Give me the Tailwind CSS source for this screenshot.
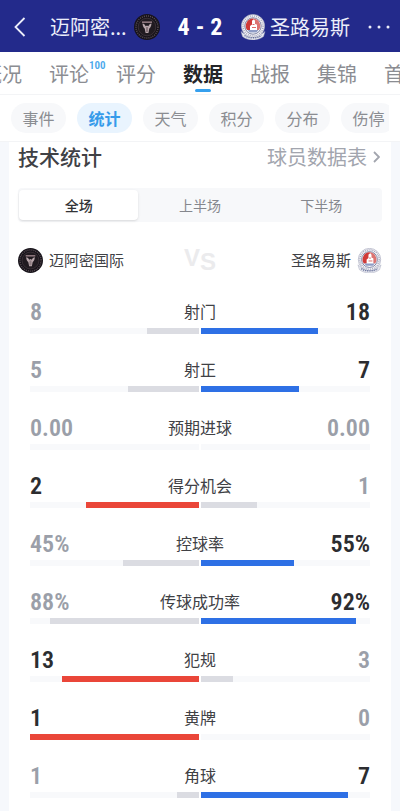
<!DOCTYPE html>
<html lang="zh-CN">
<head>
    <meta charset="UTF-8">
    <meta name="viewport" content="width=device-width, initial-scale=1.0">
    <title>技术统计</title>
    <script src="https://cdn.jsdelivr.net/npm/@tailwindcss/browser@4"></script>
</head>

<body class="bg-[#f6f8fc] font-['Noto_Sans_CJK_SC',sans-serif] text-[#404145] overflow-x-hidden">
    <!-- club badges -->
    <svg class="hidden" aria-hidden="true">
        <symbol id="miami" viewBox="0 0 26 26">
            <circle cx="13" cy="13" r="13" fill="#17131a"/>
            <circle cx="13" cy="13" r="11" fill="none" stroke="#5d5056" stroke-width="1.4" stroke-dasharray="1 1.1"/>
            <circle cx="13" cy="13" r="8.8" fill="#201a20" stroke="#4d4148" stroke-width=".6"/>
            <path d="M8 7.500h10v1.300H8z" fill="#a98d95"/>
            <path d="M8.500 9.500c1.400.2 2.500 1.200 3.200 2.700L13 11.500l1.300.7c.7-1.500 1.800-2.500 3.200-2.700-.2 2.500-1 4-2.200 5l-.9 4.500h-2.800l-.9-4.500c-1.200-1-2-2.500-2.200-5z" fill="#b9a7ac"/>
            <path d="M12.500 13v5M13.500 13v5" stroke="#5a474e" stroke-width=".5"/>
        </symbol>
        <symbol id="stlouis" viewBox="0 0 26 26">
            <path d="M1 17.500c2 2 4 3 7 3.500h10c3-.5 5-1.500 7-3.500l-1.500 5C21 24.500 17 26 13 26s-8-1.500-10.500-3.500z" fill="#e7e8ef" stroke="#a5a9be" stroke-width=".5"/>
            <circle cx="13" cy="12" r="11.600" fill="#f4f2f5" stroke="#a5a9be" stroke-width=".7"/>
            <circle cx="13" cy="12" r="10" fill="none" stroke="#969cb5" stroke-width="1.300" stroke-dasharray=".9 1.100"/>
            <circle cx="13" cy="12" r="8.200" fill="#fff" stroke="#5d668e" stroke-width=".8"/>
            <path d="M13 4.500a7.400 7.400 0 0 0-6 11.500h3v-4l2-1.500V7l2-2z" fill="#d03a38"/>
            <path d="M13 4.500a7.400 7.400 0 0 1 6 11.500h-2v-5l-2-1V7z" fill="#dc7371"/>
            <path d="M12.300 6.500h2.400v4h2V16h-6v-3.500h1.600z" fill="#fff"/>
            <path d="M12.500 10.500h2M12 13.500h4" stroke="#d34643" stroke-width=".8"/>
            <path d="M7.500 16h11l-2 2.500h-7z" fill="#8e9cc6"/>
            <path d="M4.500 21.500c2.500 1.700 5 2.300 8.500 2.300s6-.6 8.500-2.300" fill="none" stroke="#65709b" stroke-width="1.500" stroke-dasharray="1.200 1"/>
        </symbol>
    </svg>

    <header class="bg-[#232a8b] text-[#eceefa] h-[52px] pt-0.5 px-2.5 flex items-center">
        <button class="w-10 shrink-0 pl-1" aria-label="返回">
            <svg class="w-3 h-5" viewBox="0 0 12 20" fill="none" stroke="currentColor" stroke-width="1.800"><path d="M10.500 1 1.500 10l9 9"/></svg>
        </button>
        <div class="flex-1 flex items-center whitespace-nowrap">
            <span class="w-[84px] shrink-0 text-[20px]">迈阿密...</span>
            <svg class="w-[26px] h-[26px] shrink-0"><use href="#miami"/></svg>
            <span class="flex-1 flex justify-center gap-1.5 text-[24px] font-bold text-white font-['Roboto_Condensed','Liberation_Sans_Narrow',sans-serif]"><span>4</span><span>-</span><span>2</span></span>
            <svg class="w-[26px] h-[26px] shrink-0"><use href="#stlouis"/></svg>
            <span class="w-[84px] shrink-0 pl-1 text-[20px]">圣路易斯</span>
        </div>
        <button class="w-10 shrink-0 flex justify-end" aria-label="更多">
            <svg class="w-[22px] h-1" viewBox="0 0 22 4" fill="currentColor"><circle cx="2" cy="2" r="1.500"/><circle cx="11" cy="2" r="1.500"/><circle cx="20" cy="2" r="1.500"/></svg>
        </button>
    </header>

    <nav class="bg-white h-[43px] border-b border-[#f3f4f6] overflow-hidden">
        <div class="-ml-[18px] h-full flex gap-[27px] text-[20px] leading-[44px] text-[#8b8d92] whitespace-nowrap">
            <a href="#">概况</a>
            <a href="#" class="relative">评论<span class="absolute left-full top-2 text-[11px] leading-3 font-semibold text-[#4aa8ec] font-['Roboto_Condensed','Liberation_Sans_Narrow',sans-serif]">100</span></a>
            <a href="#">评分</a>
            <a href="#" class="relative font-bold text-[#242529]">数据<span class="absolute left-3 bottom-0.5 w-4 h-[3px] rounded-full bg-[#36a0ee]"></span></a>
            <a href="#">战报</a>
            <a href="#">集锦</a>
            <a href="#">首发</a>
        </div>
    </nav>

    <nav class="bg-white h-[47px] px-[11px] border-b border-[#f3f4f6] flex items-center">
        <div class="flex-1 flex gap-[11px] overflow-hidden text-[16px] leading-[30px] text-center text-[#8b8d92] whitespace-nowrap">
            <a href="#" class="w-[55px] shrink-0 rounded-full bg-[#f7f8fa]">事件</a>
            <a href="#" class="w-[55px] shrink-0 rounded-full bg-[#e9f4fe] font-bold text-[#369bea]">统计</a>
            <a href="#" class="w-[55px] shrink-0 rounded-full bg-[#f7f8fa]">天气</a>
            <a href="#" class="w-[55px] shrink-0 rounded-full bg-[#f7f8fa]">积分</a>
            <a href="#" class="w-[55px] shrink-0 rounded-full bg-[#f7f8fa]">分布</a>
            <a href="#" class="w-[55px] shrink-0 rounded-full bg-[#f7f8fa]">伤停</a>
        </div>
    </nav>

    <main class="mx-[9px] px-[9px] bg-white">
        <div class="h-[46px] pb-4 flex items-center justify-between">
            <h1 class="text-[21px] font-medium">技术统计</h1>
            <a href="#" class="flex items-center gap-1.5 pr-0.5 text-[20px] text-[#a2a5ae]">球员数据表
                <svg class="w-[7px] h-3" viewBox="0 0 7 12" fill="none" stroke="currentColor" stroke-width="1.800"><path d="m1 1 5 5-5 5"/></svg>
            </a>
        </div>

        <div class="h-[34px] py-0.5 grid grid-cols-3 rounded bg-[#f7f8fa] text-[14px] text-[#85878d]">
            <button class="mx-px rounded bg-white shadow text-[#333437] font-medium">全场</button>
            <button>上半场</button>
            <button>下半场</button>
        </div>

        <div class="h-[76px] grid grid-cols-[1fr_auto_1fr] items-center text-[15px]">
            <div class="flex items-center gap-1.5">
                <svg class="w-[25px] h-[25px]"><use href="#miami"/></svg>
                <span>迈阿密国际</span>
            </div>
            <div class="flex text-[#ebebed] text-[24px] leading-6 font-extrabold font-['Liberation_Sans',sans-serif]">
                <span class="pb-1">V</span><span class="pt-1">S</span>
            </div>
            <div class="flex items-center justify-end gap-1.5">
                <span>圣路易斯</span>
                <svg class="w-[25px] h-[25px]"><use href="#stlouis"/></svg>
            </div>
        </div>

        <ul id="stats" class="px-3"></ul>
    </main>

    <script>
        // l / r are the bar lengths in percent of each half
        const stats = [
            { name: "射门", home: "8", away: "18", l: 31, r: 69, win: "away" },
            { name: "射正", home: "5", away: "7", l: 42, r: 58, win: "away" },
            { name: "预期进球", home: "0.00", away: "0.00", l: 0, r: 0, win: "" },
            { name: "得分机会", home: "2", away: "1", l: 67, r: 33, win: "home" },
            { name: "控球率", home: "45%", away: "55%", l: 45, r: 55, win: "away" },
            { name: "传球成功率", home: "88%", away: "92%", l: 88, r: 92, win: "away" },
            { name: "犯规", home: "13", away: "3", l: 81, r: 19, win: "home" },
            { name: "黄牌", home: "1", away: "0", l: 100, r: 0, win: "home" },
            { name: "角球", home: "1", away: "7", l: 13, r: 87, win: "away" }
        ];
        const list = document.getElementById("stats");

        stats.forEach(item => {
            const homeText = item.win === "home" ? "text-[#2c2d30]" : "text-[#9b9fa9]";
            const awayText = item.win === "away" ? "text-[#2c2d30]" : "text-[#9b9fa9]";
            const homeBar = item.win === "home" ? "bg-[#ea4639]" : "bg-[#dbdce2]";
            const awayBar = item.win === "away" ? "bg-[#2e70e5]" : "bg-[#dbdce2]";

            const row = document.createElement("li");
            row.className = "h-[58px]";
            row.innerHTML = `
                <div class="h-[30px] pb-1 grid grid-cols-[1fr_auto_1fr] items-center">
                    <span class="pt-0.5 text-[24px] leading-6 font-semibold font-['Roboto_Condensed','Liberation_Sans_Narrow',sans-serif] ${homeText}">${item.home}</span>
                    <span class="text-[16px]">${item.name}</span>
                    <span class="pt-0.5 text-right text-[24px] leading-6 font-semibold font-['Roboto_Condensed','Liberation_Sans_Narrow',sans-serif] ${awayText}">${item.away}</span>
                </div>
                <div class="grid grid-cols-2 gap-0.5">
                    <div class="h-1.5 flex justify-end bg-[#f8f9fb]"><div class="${homeBar}" style="width: ${item.l}%"></div></div>
                    <div class="h-1.5 flex bg-[#f8f9fb]"><div class="${awayBar}" style="width: ${item.r}%"></div></div>
                </div>`;
            list.appendChild(row);
        });
    </script>
</body>
</html>
